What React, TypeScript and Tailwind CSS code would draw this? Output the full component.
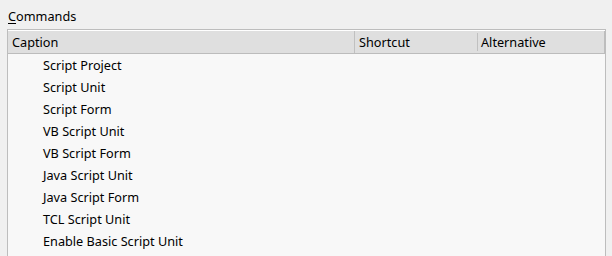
import React from "react";

const items = [
  "Script Project",
  "Script Unit",
  "Script Form",
  "VB Script Unit",
  "VB Script Form",
  "Java Script Unit",
  "Java Script Form",
  "TCL Script Unit",
  "Enable Basic Script Unit",
];

export default function App() {
  return (
    <div
      className="w-[612px] h-[256px] overflow-hidden bg-[#f0f0f0] text-[12.7px] text-[#000]"
      style={{ fontFamily: '"Noto Sans", "Open Sans", sans-serif' }}
    >
      <div className="pl-[8px] pt-[6px] h-[29px] leading-[20px]">
        <span className="underline underline-offset-2">C</span>ommands
      </div>
      <div className="ml-[7px] w-[599px] h-[300px] border border-[#bdbdbd] bg-[#f8f8f8]">
        <div className="flex h-[24px] bg-[#dfdfdf] border-t border-t-white border-b border-b-[#bcbcbc] items-center">
          <div className="w-[347px] pl-[4px] pt-[1px] border-r border-[#c0c0c0] h-full flex items-center">Caption</div>
          <div className="w-[123px] pl-[4px] pt-[1px] border-r border-[#c0c0c0] h-[18px] flex items-center">Shortcut</div>
          <div className="flex-1 pl-[3px] pt-[1px] h-full flex items-center">Alternative</div>
          <div className="w-[1px] h-full bg-[#bdbdbd]" />
        </div>
        <div className="flex flex-col">
          {items.map((t) => (
            <div key={t} className="h-[22px] pl-[35px] pt-[1px] flex items-center">
              {t}
            </div>
          ))}
        </div>
      </div>
    </div>
  );
}
